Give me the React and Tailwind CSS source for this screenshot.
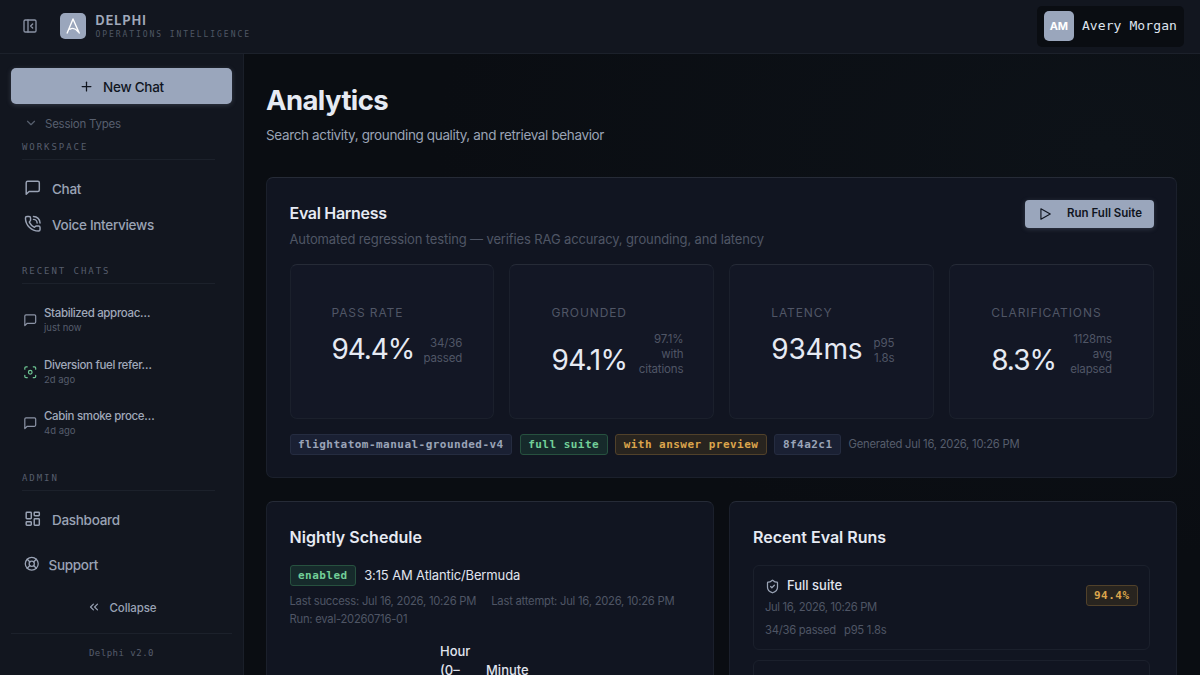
import React from 'react';
import {
  ChevronDown,
  ChevronsLeft,
  Focus,
  LayoutDashboard,
  LifeBuoy,
  PanelLeftClose,
  PhoneCall,
  Plus,
  ShieldCheck,
} from 'lucide-react';

const MessageIcon = ({ className }) => (
  <svg viewBox="0 0 24 24" className={className} fill="none" stroke="currentColor" strokeWidth="2" strokeLinecap="round" strokeLinejoin="round">
    <path d="M21 15a2 2 0 0 1-2 2H7l-4 4V5a2 2 0 0 1 2-2h14a2 2 0 0 1 2 2z" />
  </svg>
);

const PlayIcon = ({ className }) => (
  <svg viewBox="0 0 24 24" className={className} fill="none" stroke="currentColor" strokeWidth="2" strokeLinecap="round" strokeLinejoin="round">
    <path d="M5 3l16 9-16 9z" />
  </svg>
);

const CHATS = [
  { id: 1, title: 'Stabilized approac…', time: 'just now', icon: MessageIcon, color: 'text-[#8b93a5]' },
  { id: 2, title: 'Diversion fuel refer…', time: '2d ago', icon: Focus, color: 'text-[#6fc794]' },
  { id: 3, title: 'Cabin smoke proce…', time: '4d ago', icon: MessageIcon, color: 'text-[#8b93a5]' },
];

const STATS = [
  { label: 'PASS RATE', value: '94.4%', tracking: 'tracking-[-1.1px]', note: ['34/36', 'passed'], noteWidth: 'w-[48px]' },
  { label: 'GROUNDED', value: '94.1%', tracking: 'tracking-[-0.6px]', note: ['97.1%', 'with', 'citations'], noteWidth: 'w-[56px]' },
  { label: 'LATENCY', value: '934ms', tracking: 'tracking-[-0.2px]', note: ['p95', '1.8s'], noteWidth: 'w-[32px]' },
  { label: 'CLARIFICATIONS', value: '8.3%', tracking: 'tracking-[-1px]', note: ['1128ms', 'avg', 'elapsed'], noteWidth: 'w-[56px]' },
];

const MONO = "font-['DejaVu_Sans_Mono',monospace]";

const TONES = {
  neutral: 'bg-[#1a2033] border-[#252c40] text-[#9aa4b8]',
  green: 'bg-[#162a2b] border-[#27513f] text-[#72cf98]',
  amber: 'bg-[#28241f] border-[#51412a] text-[#dca54c]',
};

const Badge = ({ tone, children }) => (
  <span className={`${MONO} ${TONES[tone]} h-[21px] shrink-0 px-[7.5px] border rounded-[3px] text-[11px] leading-[19px] font-bold tracking-[0.47px] whitespace-pre`}>
    {children}
  </span>
);

const Card = ({ className, children }) => (
  <div className={`border border-[#1b202c] border-t-[#262b37] rounded-[7px] ${className}`}>
    {children}
  </div>
);

const SectionLabel = ({ className, children }) => (
  <div className={`${MONO} ${className} ml-[11px] mr-[17px] pt-px h-[21px] border-b border-[#1c212b] text-[9px] leading-[15px] tracking-[1.95px] text-[#565d6c]`}>
    {children}
  </div>
);

const NavItem = ({ icon: Icon, label, iconClass, className }) => (
  <div className={`flex items-center h-9 pl-[13px] text-[13.5px] leading-5 font-medium tracking-[-0.3px] text-[#9aa3b5] ${className}`}>
    <Icon className={iconClass} />
    <span className="pt-px">{label}</span>
  </div>
);

const Header = () => (
  <header className="flex items-center h-[54px] pb-px shrink-0 bg-[#12161f] border-b border-[#1c212b]">
    <PanelLeftClose className="ml-[22px] w-4 h-4 text-[#8b93a5]" />
    <div className="ml-[22px] w-[26px] h-[26px] rounded-[5px] bg-[#9aa6bc] flex items-center justify-center">
      <svg viewBox="0 0 26 26" className="w-[26px] h-[26px]" fill="none" stroke="white" strokeWidth="1.4" strokeLinecap="round" strokeLinejoin="round">
        <path d="M7.2 20 13 6l6.2 14M10 16.2c3-1.8 5.5-.8 8.2 2.5" />
      </svg>
    </div>
    <div className={`${MONO} ml-[9.5px] pt-[3px]`}>
      <div className="font-['Inter',sans-serif] text-[12.5px] leading-[14px] font-bold tracking-[1.1px] text-[#a0a9ba]">DELPHI</div>
      <div className="text-[8px] leading-[13px] tracking-[1.94px] text-[#4f5664]">OPERATIONS INTELLIGENCE</div>
    </div>
    <div className={`${MONO} ml-auto mr-4 h-[41px] pl-[7px] pr-[7px] flex items-center gap-2 rounded-[5px] bg-[#0a0d12] text-[13px] tracking-[0.1px] text-[#dfe4ee]`}>
      <div className="w-[30px] h-[30px] rounded-[5px] bg-[#9aa6bc] flex items-center justify-center font-['Inter',sans-serif] text-[11px] font-bold tracking-normal text-white">AM</div>
      <span>Avery Morgan</span>
    </div>
  </header>
);

const Sidebar = () => (
  <aside className="w-[244px] shrink-0 pl-[11px] pr-[11px] pt-[14px] bg-[#12161f] border-r border-[#1a1f29]">
    <div className="h-9 rounded-[5px] bg-[#9aa6bc] text-[#10151f] flex items-center justify-center gap-[9px] text-[13.5px] leading-5 font-medium tracking-[-0.28px] shadow-[0_1px_5px_rgba(154,166,188,0.25)]">
      <Plus className="w-[15px] h-[15px]" />
      <span className="pt-px">New Chat</span>
    </div>
    <div className="mt-[9px] h-5 pl-[13px] flex items-center gap-[7px] text-[11.5px] leading-4 tracking-[-0.24px] text-[#575f6e]">
      <ChevronDown className="w-[14px] h-[14px]" />
      <span className="pt-px">Session Types</span>
    </div>
    <SectionLabel className="mt-1.5">WORKSPACE</SectionLabel>
    <NavItem icon={MessageIcon} label="Chat" iconClass="w-[17.5px] h-[17.5px]" className="mt-[10px] gap-[10.5px]" />
    <NavItem icon={PhoneCall} label="Voice Interviews" iconClass="w-[17.5px] h-[17.5px]" className="gap-[10.5px]" />

    <SectionLabel className="mt-[21px]">RECENT CHATS</SectionLabel>
    <div className="mt-[10.5px]">
      {CHATS.map(({ id, title, time, icon: Icon, color }) => (
        <div key={id} className="flex items-center h-[51.5px] pl-[11.5px] gap-[7px]">
          <Icon className={`w-[14.5px] h-[14.5px] ${color}`} />
          <div className="pb-[1.5px]">
            <div className="text-[11.5px] leading-4 font-medium tracking-[-0.34px] text-[#a0a9ba]">{title}</div>
            <div className="text-[9.5px] leading-[13px] text-[#565d6c]">{time}</div>
          </div>
        </div>
      ))}
    </div>

    <SectionLabel className="mt-[21px]">ADMIN</SectionLabel>
    <NavItem icon={LayoutDashboard} label="Dashboard" iconClass="w-[17.5px] h-[17.5px]" className="mt-[10px] gap-[10.5px]" />
    <NavItem icon={LifeBuoy} label="Support" iconClass="w-[15.5px] h-[15.5px]" className="mt-[9px] gap-[9px]" />
    <div className="mt-[15px] h-5 flex items-center justify-center gap-[9px] text-[11.5px] leading-4 font-medium tracking-[-0.1px] text-[#9aa3b5]">
      <ChevronsLeft className="w-[14px] h-[14px]" />
      <span className="pt-px">Collapse</span>
    </div>
    <div className={`${MONO} mt-4 pt-3 border-t border-[#1c212b] text-center text-[9px] leading-[14px] tracking-[0.5px] text-[#565d6c]`}>
      Delphi v2.0
    </div>
  </aside>
);

const EvalHarness = () => (
  <Card className="mt-[32px] h-[301px] pl-[22.5px] pr-[22px] pt-[21.5px] bg-[#111521]">
    <div className="flex justify-between h-[64.5px]">
      <div>
        <h2 className="text-[16px] leading-[26px] font-semibold tracking-[-0.3px] text-[#e6eaf3]">Eval Harness</h2>
        <p className="text-[13px] leading-[26px] tracking-[-0.13px] text-[#4f5565]">
          Automated regression testing — verifies RAG accuracy, grounding, and latency
        </p>
      </div>
      <div className="w-[129px] h-7 pl-[13px] flex items-center gap-[15px] rounded-[4px] bg-[#9aa6bc] text-[11.5px] font-semibold text-[#10151f] shadow-[0_1px_5px_rgba(154,166,188,0.25)]">
        <PlayIcon className="w-[14px] h-[14px]" />
        Run Full Suite
      </div>
    </div>
    <div className="grid grid-cols-4 gap-[15px]">
      {STATS.map((stat) => (
        <Card key={stat.label} className="h-[155px] pl-[41px] pt-[40px] bg-[#131725]">
          <div className="text-[12px] leading-4 tracking-[0.9px] text-[#505666]">{stat.label}</div>
          <div className="mt-[11px] flex items-end">
            <div className={`text-[28px] leading-[34px] text-[#e6eaf3] ${stat.tracking}`}>{stat.value}</div>
            <div className={`${stat.noteWidth} text-[11.5px] leading-[15px] tracking-[-0.15px] text-right text-[#505666]`}>
              {stat.note.map((line) => (
                <div key={line}>{line}</div>
              ))}
            </div>
          </div>
        </Card>
      ))}
    </div>
    <div className="mt-[15px] flex items-center gap-[7.5px]">
      <Badge tone="neutral">flightatom-manual-grounded-v4</Badge>
      <Badge tone="green">full suite</Badge>
      <Badge tone="amber">with answer preview</Badge>
      <Badge tone="neutral">8f4a2c1</Badge>
      <span className="text-[11.25px] tracking-[-0.24px] text-[#565d6c]">Generated Jul 16, 2026, 10:26 PM</span>
    </div>
  </Card>
);

const NightlySchedule = () => (
  <Card className="h-[300px] px-[22.5px] pt-[22px] bg-[#111521]">
    <h2 className="text-[16px] leading-[26px] font-semibold tracking-[0.03px] text-[#e6eaf3]">Nightly Schedule</h2>
    <div className="mt-[15px] flex items-center gap-2">
      <Badge tone="green">enabled</Badge>
      <span className="pb-px text-[13px] leading-5 tracking-[-0.13px] text-[#e0e4ee]">3:15 AM Atlantic/Bermuda</span>
    </div>
    <div className="mt-[5.5px] flex flex-wrap gap-x-[15px] text-[11.25px] leading-[18.5px] tracking-[-0.24px] text-[#4f5565]">
      <span>Last success: Jul 16, 2026, 10:26 PM</span>
      <span>Last attempt: Jul 16, 2026, 10:26 PM</span>
      <span>Run: eval-20260716-01</span>
    </div>
    <div className="mt-[13.5px] pl-[150.5px] flex items-end text-[13px] leading-[18.5px] font-medium text-[#e0e4ee]">
      <div className="w-[46px]">
        Hour
        <br />
        (0–
      </div>
      <div>Minute</div>
    </div>
  </Card>
);

const RecentRuns = () => (
  <Card className="h-[300px] pl-[23px] pr-[26px] pt-[22px] bg-[#111521]">
    <h2 className="text-[16px] leading-[26px] font-semibold text-[#e6eaf3]">Recent Eval Runs</h2>
    <div className="mt-[15px] h-[85px] px-[11px] pt-[10px] flex justify-between border border-[#1b202c] rounded-[6px]">
      <div className="text-[11.25px] tracking-[-0.25px] text-[#4f5565]">
        <div className="flex items-center gap-[7px] h-5 text-[13px] font-medium tracking-normal text-[#e0e4ee]">
          <ShieldCheck className="w-[15px] h-[15px] text-[#9aa3b5]" />
          Full suite
        </div>
        <div className="mt-[2px] leading-[18px] tracking-[-0.35px]">Jul 16, 2026, 10:26 PM</div>
        <div className="mt-[5px] leading-[18px] flex gap-[8px]">
          <span>34/36 passed</span>
          <span>p95 1.8s</span>
        </div>
      </div>
      <div className="mt-[9px]">
        <div className="flex">
          <Badge tone="amber">94.4%</Badge>
        </div>
      </div>
    </div>
    <div className="mt-[10px] h-[85px] border border-[#1b202c] rounded-[6px]" />
  </Card>
);

export default function App() {
  return (
    <div className="w-[1200px] h-[675px] overflow-hidden flex flex-col bg-[#0a0d12] font-['Inter',sans-serif]">
      <Header />
      <div className="flex flex-1 min-h-0">
        <Sidebar />
        <main className="flex-1 min-w-0 pl-[22px] pr-[23px] pt-[28px] bg-[radial-gradient(ellipse_at_90%_15%,#0d1218_0%,#0a0d12_55%)]">
          <h1 className="text-[27.5px] leading-9 font-bold tracking-[-0.6px] text-[#e6eaf3]">Analytics</h1>
          <p className="mt-[7px] text-[13.5px] leading-5 tracking-[-0.36px] text-[#9aa3b5]">Search activity, grounding quality, and retrieval behavior</p>
          <EvalHarness />
          <div className="mt-[23px] grid grid-cols-2 gap-[15px]">
            <NightlySchedule />
            <RecentRuns />
          </div>
        </main>
      </div>
    </div>
  );
}
